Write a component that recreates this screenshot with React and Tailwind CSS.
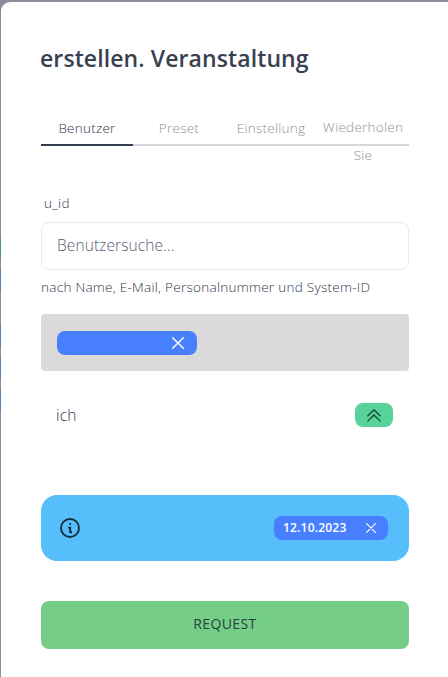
import React from "react";

const tabs = ["Preset", "Einstellung"];

function Close({ className }) {
  return (
    <svg viewBox="0 0 12 12" className={className} fill="none" stroke="currentColor" strokeWidth="1.4" strokeLinecap="round">
      <path d="M.7.7l10.6 10.6M11.3.7L.7 11.3" />
    </svg>
  );
}

function Backdrop() {
  return (
    <div className="absolute left-0 top-0 h-[677px] w-px">
      <div className="mt-[236px] h-6 bg-[#5c8f88]" />
      <div className="mt-2 h-6 bg-[#5f83ad]" />
      <div className="mt-8 h-6 bg-[#5f83ad]" />
      <div className="mt-[9px] h-6 bg-[#5f83ad]" />
      <div className="mt-2 h-6 bg-[#5f83ad]" />
    </div>
  );
}

export default function App() {
  return (
    <div className="relative h-[677px] w-[448px] overflow-hidden bg-[#8c8c9a] pl-px pt-0.5 font-['Open_Sans','Noto_Sans',sans-serif] font-light text-[#374151]">
      <Backdrop />
      <main className="relative flex h-[690px] w-[448px] flex-col rounded-l-[9px] bg-white px-10 pt-10">
        <h1 className="-ml-px h-8 whitespace-nowrap text-[23px] font-semibold leading-8 tracking-[0.1px]"><span>erstellen. Veranstaltung</span></h1>

        <nav className="mt-[38px] grid h-[34px] grid-cols-4 text-center text-[13.5px] leading-7 tracking-[0.25px]">
          <button className="h-[34px] border-b-2 border-[#343c50] text-[#30364c]"><span>Benutzer</span></button>
          {tabs.map((label) => (
            <button key={label} className="h-[34px] border-b-2 border-[#d5d6dc] text-[#8f919b]"><span>{label}</span></button>
          ))}
          <button className="flex h-[34px] flex-col items-center border-b-2 border-[#d5d6dc] pt-px text-[#8f919b]">
            <span>Wiederholen</span>
            <span>Sie</span>
          </button>
        </nav>

        <label className="mt-[47px] h-5 pl-[3px] text-[13.5px] leading-5 tracking-[0.3px] text-[#30364c]"><span>u_id</span></label>
        <input
          className="mt-[9px] h-12 w-full rounded-lg border border-[#e9e9ec] px-[15px] pb-[2px] text-[15.5px] tracking-[0.1px] outline-none placeholder:text-[#575d70]"
          placeholder="Benutzersuche..."
        />
        <p className="mt-[7px] h-5 whitespace-nowrap text-[13.5px] leading-5 tracking-[0.28px] text-[#30364c]"><span>nach Name, E-Mail, Personalnummer und System-ID</span></p>

        <div className="mt-[17px] flex h-[57px] items-center rounded bg-[#dadada] px-4">
          <div className="flex h-6 w-[140px] items-center justify-end rounded-lg bg-[#487fff] pr-[13px] text-white">
            <Close className="size-3" />
          </div>
        </div>

        <div className="mt-8 flex h-6 items-center justify-between px-4">
          <span className="-ml-px text-[15.5px] leading-6 tracking-[0.2px] text-[#30364c]">ich</span>
          <button className="flex h-6 w-[38px] items-center justify-center rounded-lg bg-[#57d299] text-[#173d32]">
            <svg viewBox="0 0 14 13" className="h-[13px] w-3.5" fill="none" stroke="currentColor" strokeWidth="1.3">
              <path d="M.4 7.2L7 .8l6.6 6.4M.4 12.4L7 6l6.6 6.4" />
            </svg>
          </button>
        </div>

        <section className="mt-[68px] flex h-[66px] items-center justify-between rounded-2xl bg-[#56bffb] pl-[19px] pr-[21px]">
          <svg viewBox="0 0 20 20" className="size-5 text-[#113143]" fill="none" stroke="currentColor" strokeWidth="1.9">
            <circle cx="10" cy="10" r="9" />
            <path d="M8.2 9.6h2v4.6H12" />
            <path d="M9.2 6h1.9" />
          </svg>
          <div className="flex h-6 w-[114px] items-center justify-between rounded-lg bg-[#487fff] pl-[9px] pr-3 text-xs font-semibold tracking-[0.2px] text-white">
            <span>12.10.2023</span>
            <Close className="size-2.5" />
          </div>
        </section>

        <button className="mt-10 h-12 rounded-lg bg-[#76cd88] pb-[2px] text-sm font-normal tracking-[0.4px] text-[#24413b]"><span>REQUEST</span></button>
      </main>
    </div>
  );
}
